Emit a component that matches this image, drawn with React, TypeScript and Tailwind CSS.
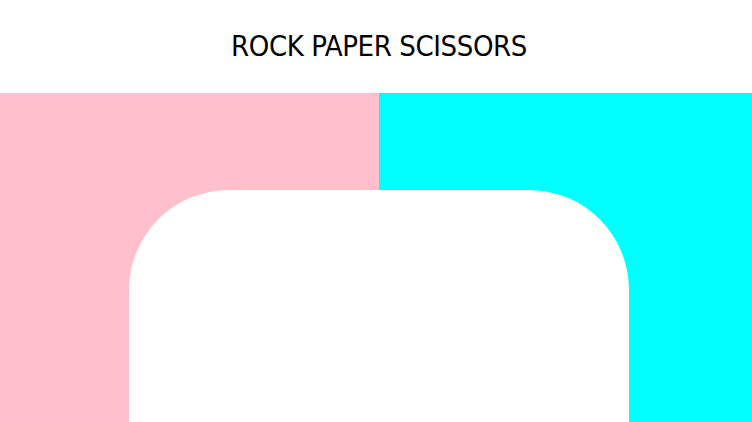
const App = () => {
  return (
    <div className="h-screen bg-white overflow-hidden">
      <header className="h-[93px] flex items-center justify-center pl-[6px]">
        <h1 className="font-['DejaVu_Sans_Condensed','DejaVu_Sans',sans-serif] text-[29px] leading-none text-black tracking-[-0.4px]">
          ROCK PAPER SCISSORS
        </h1>
      </header>

      <main className="bg-[linear-gradient(to_right,#ffc0cb_379px,#00ffff_379px)] pt-[97px] h-[329px] overflow-hidden">
        <div className="ml-[129px] w-[500px] h-[400px] bg-white rounded-t-[100px]" />
      </main>
    </div>
  );
};

export default App;
